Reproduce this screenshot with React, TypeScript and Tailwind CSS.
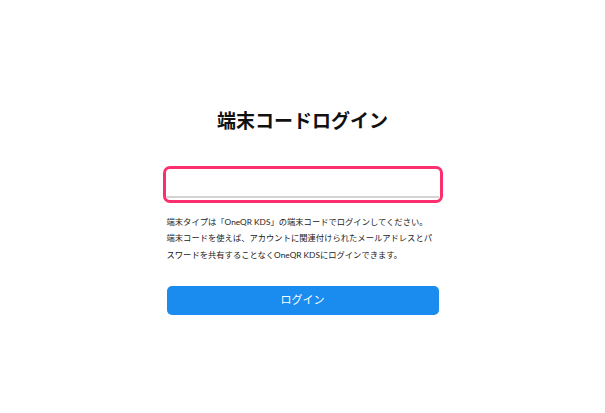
export default function App() {
  return (
    <main
      className="w-full h-[413px] bg-white flex flex-col items-center pt-[107px]"
      style={{ fontFamily: 'Lato, "Noto Sans CJK JP", sans-serif' }}
    >
      <h1 className="text-[19px] leading-[28px] font-bold text-[#111]">端末コードログイン</h1>

      {/* Focused code input */}
      <div className="mt-[31px] w-[280px] h-[37px] border-[3px] border-[#fc2f6e] rounded-[7px] px-[1px] pb-[2px] flex">
        <input
          type="text"
          className="w-full h-full bg-transparent border-b-2 border-[#d4d4d4] outline-none text-[12px] px-1"
        />
      </div>

      <p className="mt-[11px] w-[272px] text-[8.3px] leading-[16.4px] text-[#222] whitespace-nowrap">
        端末タイプは「OneQR KDS」の端末コードでログインしてください。
        <br />
        端末コードを使えば、アカウントに関連付けられたメールアドレスとパ
        <br />
        スワードを共有することなくOneQR KDSにログインできます。
      </p>

      <button className="mt-[23px] w-[272px] h-[29px] rounded-[5px] bg-[#1a8cef] text-white text-[11px]">
        ログイン
      </button>
    </main>
  );
}
